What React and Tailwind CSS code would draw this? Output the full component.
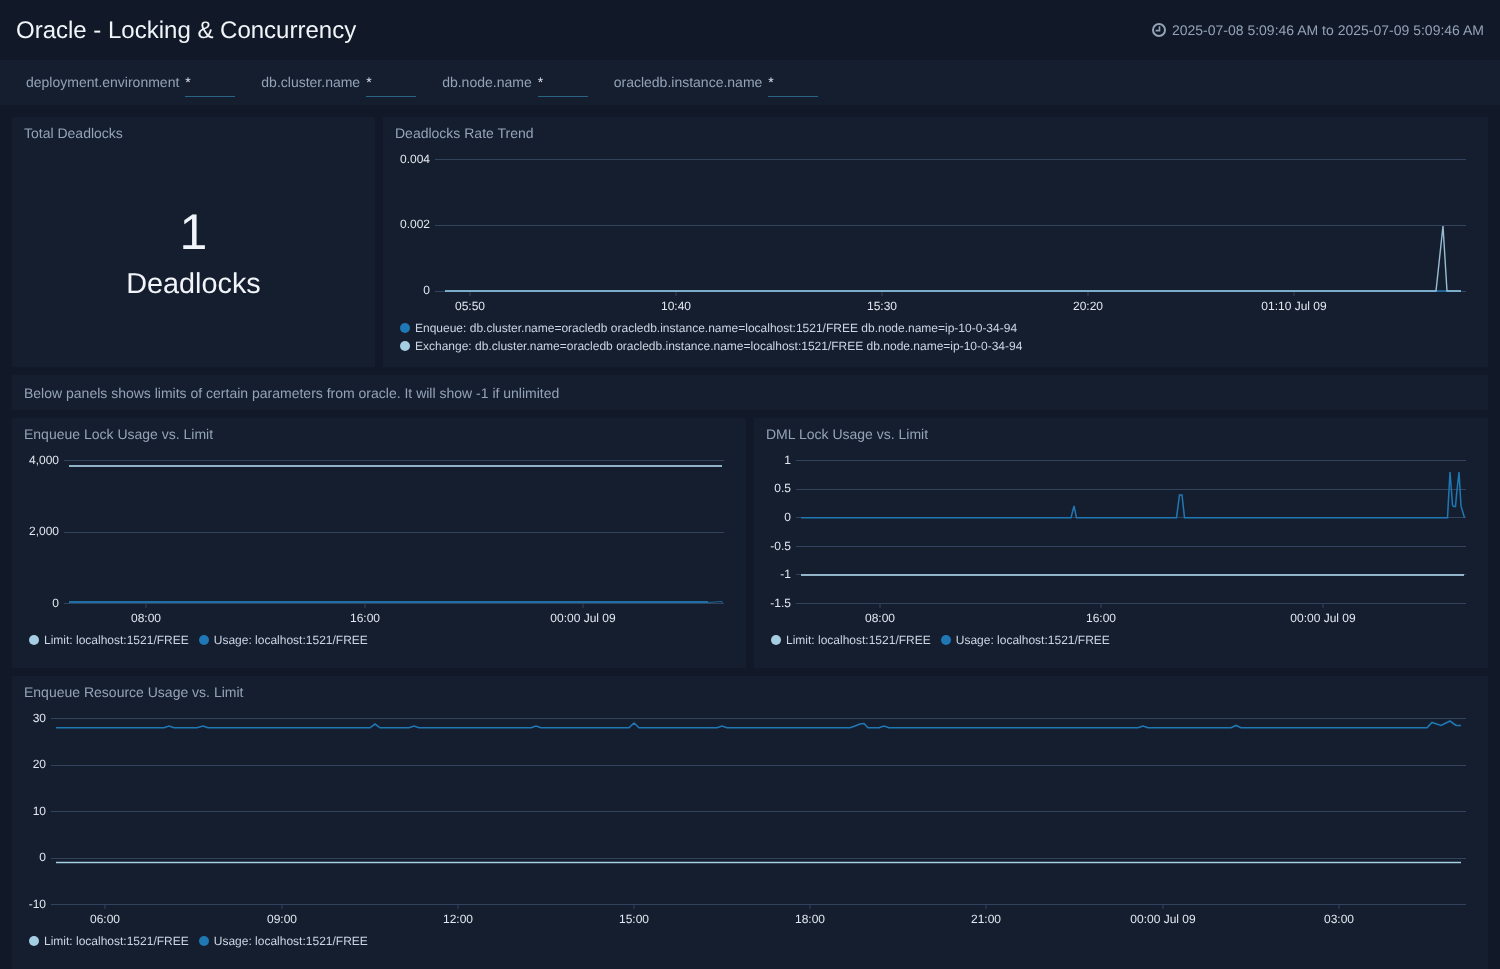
import React from "react";

const GRID = "#33435e";
const LIGHT = "#a6cee3";
const BLUE = "#1f78b4";
const FONT = "Arial, 'Liberation Sans', sans-serif";

function Chart({ x, y, w, h, grids, gx1, gx2, labelX, xlabels, xAxisY, xLabelY, children }) {
  return (
    <svg className="block shrink-0" width={w} height={h} viewBox={`${x} ${y} ${w} ${h}`}>
      {grids.map(([gy, label, ly]) => (
        <g key={label}>
          <line x1={gx1} x2={gx2} y1={gy} y2={gy} stroke={GRID} strokeWidth="1" />
          <text x={labelX} y={ly} textAnchor="end" fill="#e2e8f0" fontSize="12" fontFamily={FONT}>{label}</text>
        </g>
      ))}
      {xlabels.map(([tx, label]) => (
        <g key={label}>
          <line x1={tx} x2={tx} y1={xAxisY} y2={xAxisY + 5} stroke={GRID} strokeWidth="1" />
          <text x={tx} y={xLabelY} textAnchor="middle" fill="#e2e8f0" fontSize="12" fontFamily={FONT}>{label}</text>
        </g>
      ))}
      {children}
    </svg>
  );
}

function Dot({ color }) {
  return <span className="inline-block w-[10px] h-[10px] rounded-full shrink-0" style={{ backgroundColor: color }} />;
}

function Legend({ items }) {
  return (
    <div className="flex pl-[17px] h-[18px] items-center gap-[10px] text-xs text-[#cbd5e1]">
      {items.map(([c, t]) => (
        <div key={t} className="flex items-center gap-[5px]">
          <Dot color={c} />
          <span>{t}</span>
        </div>
      ))}
    </div>
  );
}

function Panel({ title, className = "", children }) {
  return (
    <div className={`bg-[#151e2f] overflow-hidden ${className}`}>
      <div className="pl-3 pt-[6px] h-[29px] text-sm leading-5 text-[#94a3b8]">{title}</div>
      {children}
    </div>
  );
}

function Filter({ name }) {
  return (
    <div className="flex items-center gap-[6px] h-[45px]">
      <span className="text-sm text-[#94a3b8] pb-[1px]">{name}</span>
      <span className="w-[50px] h-[28px] mt-[1px] border-b border-[#2a6386] text-sm text-[#e2e8f0] leading-[26px]">*</span>
    </div>
  );
}

const dmlPts =
  "801,517.7 1071,517.7 1074,506 1076.5,517.7 1176.5,517.7 1179.5,495 1182,495 1184.5,517.7 1447.5,517.7 1450,472 1452.5,505 1453.5,506.5 1455.5,506.5 1456.5,495 1459,472 1461,506 1464.5,517.7";

const resourcePts =
  "56,727.8 164,727.8 169,726 174,727.8 197,727.8 203,726 208,727.8 370,727.8 375,724 380,727.8 409,727.8 414,726 419,727.8 531,727.8 536,726 541,727.8 629,727.8 634,723 639,727.8 717,727.8 722,726 727,727.8 850,727.8 855,726 860,724 864,723.5 868,727.8 879,727.8 884,726 889,727.8 1138,727.8 1143,726 1148,727.8 1231,727.8 1236,725.5 1241,727.8 1427,727.8 1432,722.5 1441,725.5 1450,721 1456,725.5 1461,725.5";

export default function App() {
  return (
    <div className="w-[1500px] h-[969px] overflow-hidden bg-[#111827] font-[Arial,'Liberation_Sans',sans-serif] antialiased [text-rendering:geometricPrecision] will-change-transform">
      <header className="h-[60px] flex items-center justify-between px-4">
        <h1 className="text-2xl text-[#f1f5f9] pt-[1px]">Oracle - Locking &amp; Concurrency</h1>
        <div className="flex items-center gap-[6px] text-sm text-[#94a3b8]">
          <svg width="14" height="14" viewBox="0 0 14 14" fill="none" stroke="#94a3b8">
            <circle cx="7" cy="7" r="6" strokeWidth="2" />
            <path d="M7.5 3.2V7.6H3.6" strokeWidth="1.6" />
          </svg>
          <span>2025-07-08 5:09:46 AM to 2025-07-09 5:09:46 AM</span>
        </div>
      </header>

      <div className="h-[45px] bg-[#151e2f] flex pl-[26px] gap-[26px]">
        <Filter name="deployment.environment" />
        <Filter name="db.cluster.name" />
        <Filter name="db.node.name" />
        <Filter name="oracledb.instance.name" />
      </div>

      <main className="px-3 pt-3 flex flex-col gap-2">
        <div className="flex gap-2 h-[250px]">
          <Panel title="Total Deadlocks" className="w-[363px] shrink-0">
            <div className="flex flex-col items-center text-[#f1f5f9] pt-[48px]">
              <div className="text-[50px] leading-[76px]">1</div>
              <div className="text-[28.8px] leading-[28px]">Deadlocks</div>
            </div>
          </Panel>
          <Panel title="Deadlocks Rate Trend" className="flex-1">
            <Chart
              x={383} y={146} w={1105} h={173}
              grids={[[159.5, "0.004", 163], [225.5, "0.002", 228], [291.5, "0", 294]]}
              gx1={435} gx2={1466} labelX={430}
              xlabels={[[470, "05:50"], [676, "10:40"], [882, "15:30"], [1088, "20:20"], [1294, "01:10 Jul 09"]]}
              xAxisY={291} xLabelY={310}
            >
              <polyline points="445,291 1461,291" fill="none" stroke={BLUE} strokeWidth="1.5" />
              <polyline points="445,291 1436,291 1443,226 1447,291 1461,291" fill="none" stroke={LIGHT} strokeWidth="1.4" strokeOpacity="0.9" />
            </Chart>
            <div className="flex flex-col">
              <Legend items={[[BLUE, "Enqueue: db.cluster.name=oracledb oracledb.instance.name=localhost:1521/FREE db.node.name=ip-10-0-34-94"]]} />
              <Legend items={[[LIGHT, "Exchange: db.cluster.name=oracledb oracledb.instance.name=localhost:1521/FREE db.node.name=ip-10-0-34-94"]]} />
            </div>
          </Panel>
        </div>

        <div className="h-[35px] bg-[#151e2f] pl-3 flex items-center text-sm text-[#94a3b8]">
          Below panels shows limits of certain parameters from oracle. It will show -1 if unlimited
        </div>

        <div className="flex gap-2 h-[250px]">
          <Panel title="Enqueue Lock Usage vs. Limit" className="flex-1">
            <Chart
              x={12} y={447} w={734} h={184}
              grids={[[460.5, "4,000", 464], [532.5, "2,000", 535], [603.5, "0", 607]]}
              gx1={64} gx2={724} labelX={59}
              xlabels={[[146, "08:00"], [365, "16:00"], [583, "00:00 Jul 09"]]}
              xAxisY={603} xLabelY={622}
            >
              <line x1="69" x2="722" y1="466" y2="466" stroke={LIGHT} strokeWidth="2" strokeOpacity="0.85" />
              <polyline points="707,602.5 722,601.5 722,603" fill="none" stroke={BLUE} strokeWidth="1" strokeOpacity="0.8" />
              <line x1="69" x2="708" y1="602" y2="602" stroke={BLUE} strokeWidth="2" strokeOpacity="0.9" />
            </Chart>
            <Legend items={[[LIGHT, "Limit: localhost:1521/FREE"], [BLUE, "Usage: localhost:1521/FREE"]]} />
          </Panel>
          <Panel title="DML Lock Usage vs. Limit" className="flex-1">
            <Chart
              x={754} y={447} w={734} h={184}
              grids={[[460.5, "1", 464], [489.5, "0.5", 492], [517.5, "0", 521], [546.5, "-0.5", 550], [574.5, "-1", 578], [603.5, "-1.5", 607]]}
              gx1={796} gx2={1466} labelX={791}
              xlabels={[[880, "08:00"], [1101, "16:00"], [1323, "00:00 Jul 09"]]}
              xAxisY={603} xLabelY={622}
            >
              <line x1="801" x2="1464" y1="575" y2="575" stroke={LIGHT} strokeWidth="2" strokeOpacity="0.85" />
              <polyline points={dmlPts} fill="none" stroke={BLUE} strokeWidth="1.5" />
            </Chart>
            <Legend items={[[LIGHT, "Limit: localhost:1521/FREE"], [BLUE, "Usage: localhost:1521/FREE"]]} />
          </Panel>
        </div>

        <Panel title="Enqueue Resource Usage vs. Limit" className="h-[300px] shrink-0">
          <Chart
            x={12} y={705} w={1476} h={227}
            grids={[[718.5, "30", 722], [765.5, "20", 768], [811.5, "10", 815], [858.5, "0", 861], [904.5, "-10", 908]]}
            gx1={51} gx2={1466} labelX={46}
            xlabels={[[105, "06:00"], [282, "09:00"], [458, "12:00"], [634, "15:00"], [810, "18:00"], [986, "21:00"], [1163, "00:00 Jul 09"], [1339, "03:00"]]}
            xAxisY={904} xLabelY={923}
          >
            <line x1="56" x2="1461" y1="862.5" y2="862.5" stroke={LIGHT} strokeWidth="1.6" />
            <polyline points={resourcePts} fill="none" stroke={BLUE} strokeWidth="1.6" />
          </Chart>
          <Legend items={[[LIGHT, "Limit: localhost:1521/FREE"], [BLUE, "Usage: localhost:1521/FREE"]]} />
        </Panel>
      </main>
    </div>
  );
}
